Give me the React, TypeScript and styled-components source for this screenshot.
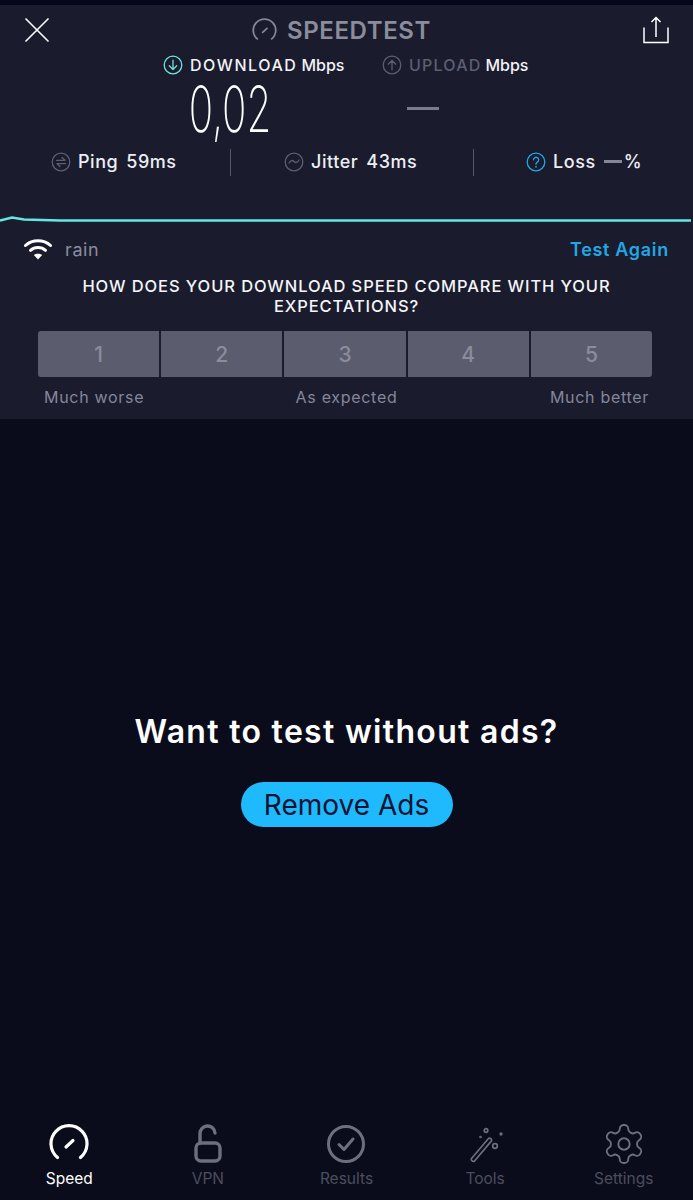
import { ReactNode } from "react";
import styled, { createGlobalStyle } from "styled-components";

const GlobalStyle = createGlobalStyle`
  html, body {
    margin: 0;
    padding: 0;
    background: #0a0c1b;
    font-family: "Inter", "Liberation Sans", sans-serif;
  }
  * {
    box-sizing: border-box;
  }
`;

const Screen = styled.div`
  width: 693px;
  height: 1200px;
  display: flex;
  flex-direction: column;
  background: #0a0c1b;
  overflow: hidden;
`;

const StatusStrip = styled.div`
  height: 5px;
  background: #05061a;
`;

const ResultPanel = styled.section`
  height: 414px;
  background: #1a1c2e;
  display: flex;
  flex-direction: column;
`;

const Header = styled.header`
  height: 50px;
  padding: 0 24px;
  display: flex;
  align-items: center;
  justify-content: space-between;
`;

const Brand = styled.div`
  margin-right: 10px;
  display: flex;
  align-items: center;
  gap: 10px;
  color: #8b8c9c;
  font-size: 24px;
  font-weight: 600;
  letter-spacing: 0.6px;
`;

const Metrics = styled.div`
  display: grid;
  grid-template-columns: 346px 1fr;
`;

const MetricColumn = styled.div<{ $left: number }>`
  padding-left: ${(props) => props.$left}px;
`;

const MetricLabel = styled.div`
  height: 20px;
  display: flex;
  align-items: center;
  gap: 7px;
  font-size: 16px;
  font-weight: 500;
  color: #f2f3f7;
  white-space: nowrap;
`;

const MetricName = styled.span<{ $muted?: boolean }>`
  color: ${(props) => (props.$muted ? "#5d5f71" : "#f2f3f7")};
  letter-spacing: ${(props) => (props.$muted ? "1.2px" : "1.55px")};
  margin-right: -3px;
`;

const MetricValue = styled.div`
  width: 134px;
  height: 68px;
  text-align: center;
  font-size: 64px;
  line-height: 68px;
  font-weight: 200;
  color: #fff;
  transform: scaleX(0.63);
`;

const EmptyDash = styled.div`
  width: 32px;
  height: 3px;
  margin: 32px 0 33px 25px;
  background: #7a7b8b;
`;

const StatsRow = styled.div`
  height: 27px;
  margin-top: 6px;
  display: grid;
  grid-template-columns: 231px 243px 1fr;
  align-items: center;
`;

const StatCell = styled.div<{ $left: number; $divider?: boolean }>`
  height: 27px;
  padding: 0 0 2px ${(props) => props.$left}px;
  display: flex;
  align-items: center;
  gap: 7px;
  border-right: ${(props) => (props.$divider ? "1px solid #56586a" : "none")};
  font-size: 18px;
  font-weight: 500;
  letter-spacing: 0.55px;
  color: #eceef3;
  white-space: nowrap;
`;

const StatValue = styled.span`
  margin-left: 1px;
`;

const StatDash = styled.span`
  width: 18px;
  height: 3px;
  margin: 0 -5px 0 1px;
  background: #85869a;
`;

const Trace = styled.svg`
  display: block;
  margin-top: 37px;
  flex: none;
`;

const NetworkRow = styled.div`
  height: 30px;
  margin-top: 9px;
  padding: 0 24px 0 24px;
  display: flex;
  align-items: center;
`;

const NetworkName = styled.span`
  margin-left: 13px;
  flex: 1;
  font-size: 18px;
  letter-spacing: 0.6px;
  color: #8b8c9c;
`;

const TestAgain = styled.span`
  font-size: 18px;
  font-weight: 600;
  letter-spacing: 0.7px;
  color: #21a7e6;
`;

const Question = styled.h2`
  width: 580px;
  margin: 12px auto 0;
  font-size: 16.5px;
  line-height: 20px;
  font-weight: 500;
  letter-spacing: 0.9px;
  color: #f4f5f8;
  text-align: center;
`;

const Ratings = styled.div`
  margin: 15px 0 0 38px;
  width: 614px;
  display: grid;
  grid-template-columns: repeat(5, 1fr);
  gap: 2px;
`;

const RatingButton = styled.button<{ $edge?: "start" | "end" }>`
  height: 46px;
  padding: 0;
  border: 0;
  border-radius: ${(props) =>
    props.$edge === "start"
      ? "3px 0 0 3px"
      : props.$edge === "end"
        ? "0 3px 3px 0"
        : "0"};
  background: #5b5c6e;
  color: #8b8c9c;
  font-family: inherit;
  font-size: 21px;
  font-weight: 500;
`;

const RatingCaptions = styled.div`
  margin: 10px 0 0 44px;
  width: 605px;
  display: grid;
  grid-template-columns: 1fr 1fr 1fr;
  font-size: 16px;
  line-height: 20px;
  letter-spacing: 0.7px;
  color: #85869a;
`;

const Caption = styled.span<{ $align: "left" | "center" | "right" }>`
  text-align: ${(props) => props.$align};
  white-space: nowrap;
`;

const AdArea = styled.main`
  flex: 1;
  display: flex;
  flex-direction: column;
  align-items: center;
  padding-top: 292px;
`;

const AdTitle = styled.h1`
  margin: 0;
  font-size: 32px;
  line-height: 42px;
  font-weight: 600;
  color: #fff;
  letter-spacing: 1.3px;
  white-space: nowrap;
`;

const RemoveAds = styled.button`
  width: 212px;
  height: 45px;
  margin-top: 29px;
  border: 0;
  border-radius: 23px;
  background: #1fb9fd;
  color: #0c1230;
  font-family: inherit;
  font-size: 28px;
  font-weight: 400;
`;

const TabBar = styled.nav`
  height: 76px;
  display: grid;
  grid-template-columns: repeat(5, 1fr);
`;

const Tab = styled.div`
  display: flex;
  flex-direction: column;
  align-items: center;
  gap: 5px;
  font-size: 15.5px;
  line-height: 20px;
`;

const TabLabel = styled.span<{ $active?: boolean }>`
  color: ${(props) => (props.$active ? "#ffffff" : "#4c4e5e")};
`;

const Gauge = ({ size, width, color }: { size: number; width: number; color: string }) => (
  <svg width={size} height={size} viewBox="0 0 40 40" fill="none" stroke={color} strokeWidth={width} strokeLinecap="round">
    <path d="M8.500 33.500A18 18 0 1 1 31.500 33.500" />
    <path d="M17 23L24 16.500" />
  </svg>
);

const Ring = ({ color, children }: { color: string; children: ReactNode }) => (
  <svg width="20" height="20" viewBox="0 0 20 20" fill="none" stroke={color} strokeWidth="1.3" strokeLinecap="round" strokeLinejoin="round">
    <circle cx="10" cy="10" r="8.800" />
    {children}
  </svg>
);

const tabs = [
  {
    label: "Speed",
    active: true,
    icon: <Gauge size={40} width={3.2} color="#ffffff" />,
  },
  {
    label: "VPN",
    icon: (
      <svg width="40" height="40" viewBox="0 0 40 40" fill="none" stroke="#6d6e7e" strokeWidth="3.400" strokeLinecap="round">
        <rect x="8" y="19" width="24" height="18" rx="5" />
        <path d="M12 19V10a7.500 7.500 0 0 1 15-1" />
      </svg>
    ),
  },
  {
    label: "Results",
    icon: (
      <svg width="40" height="40" viewBox="0 0 40 40" fill="none" stroke="#6d6e7e" strokeWidth="3" strokeLinecap="round" strokeLinejoin="round">
        <circle cx="20" cy="20" r="17.500" />
        <path d="M13 20.500L18 25.500L27 15" />
      </svg>
    ),
  },
  {
    label: "Tools",
    icon: (
      <svg width="40" height="40" viewBox="0 0 40 40" fill="none" stroke="#6d6e7e" strokeWidth="1.700" strokeLinecap="round" strokeLinejoin="round">
        <path d="M6.500 34.500L23.500 14.500a2 2 0 0 1 3 2.400L9.500 37a2 2 0 0 1-3-2.500z" />
        <circle cx="21" cy="6.500" r="1.800" />
        <circle cx="30" cy="22" r="2.300" />
        <circle cx="36" cy="10" r="0.800" />
        <circle cx="15.500" cy="13" r="0.500" />
      </svg>
    ),
  },
  {
    label: "Settings",
    icon: (
      <svg width="40" height="40" viewBox="1.500 1.500 21 21" fill="none" stroke="#6d6e7e" strokeWidth="1" strokeLinecap="round" strokeLinejoin="round">
        <path d="M12.220 2h-.44a2 2 0 0 0-2 2v.18a2 2 0 0 1-1 1.730l-.43.25a2 2 0 0 1-2 0l-.15-.08a2 2 0 0 0-2.730.73l-.22.38a2 2 0 0 0 .73 2.730l.15.1a2 2 0 0 1 1 1.720v.51a2 2 0 0 1-1 1.740l-.15.09a2 2 0 0 0-.73 2.730l.22.38a2 2 0 0 0 2.730.73l.15-.08a2 2 0 0 1 2 0l.43.25a2 2 0 0 1 1 1.730V20a2 2 0 0 0 2 2h.44a2 2 0 0 0 2-2v-.18a2 2 0 0 1 1-1.730l.43-.25a2 2 0 0 1 2 0l.15.08a2 2 0 0 0 2.730-.73l.22-.39a2 2 0 0 0-.73-2.730l-.15-.08a2 2 0 0 1-1-1.740v-.5a2 2 0 0 1 1-1.740l.15-.09a2 2 0 0 0 .73-2.730l-.22-.38a2 2 0 0 0-2.730-.73l-.15.08a2 2 0 0 1-2 0l-.43-.25a2 2 0 0 1-1-1.730V4a2 2 0 0 0-2-2z" />
        <circle cx="12" cy="12" r="3" />
      </svg>
    ),
  },
];

const App = () => {
  return (
    <Screen>
      <GlobalStyle />
      <StatusStrip />
      <ResultPanel>
        <Header>
          <svg width="26" height="26" viewBox="0 0 26 26" stroke="#ffffff" strokeWidth="1.600" fill="none">
            <path d="M1.500 1.500L24.500 24.500M24.500 1.500L1.500 24.500" />
          </svg>
          <Brand>
            <Gauge size={25} width={2.8} color="#85869a" />
            SPEEDTEST
          </Brand>
          <svg width="26" height="28" viewBox="0 0 26 28" stroke="#ffffff" strokeWidth="1.500" fill="none">
            <path d="M1 11.500V26.500H25V11.500" />
            <path d="M13 21V1.500M8.500 6L13 1.500L17.500 6" />
          </svg>
        </Header>
        <Metrics>
          <MetricColumn $left={163}>
            <MetricLabel>
              <Ring color="#6fe3dc">
                <path d="M10 5.200V14.400M6.300 10.800L10 14.500L13.700 10.800" />
              </Ring>
              <MetricName>DOWNLOAD</MetricName> Mbps
            </MetricLabel>
            <MetricValue>0,02</MetricValue>
          </MetricColumn>
          <MetricColumn $left={36}>
            <MetricLabel>
              <Ring color="#5d5f71">
                <path d="M10 14.800V5.600M6.300 9.200L10 5.500L13.700 9.200" />
              </Ring>
              <MetricName $muted>UPLOAD</MetricName> Mbps
            </MetricLabel>
            <EmptyDash />
          </MetricColumn>
        </Metrics>
        <StatsRow>
          <StatCell $left={51} $divider>
            <Ring color="#5d5f71">
              <path d="M5.500 8.300H14L11 5.500M14.500 11.700H6L9 14.500" />
            </Ring>
            Ping <StatValue>59ms</StatValue>
          </StatCell>
          <StatCell $left={53} $divider>
            <Ring color="#5d5f71">
              <path d="M5 11c1.500-3 3.500-3 5-1.500s3.500 1.500 5-1.500" />
            </Ring>
            Jitter <StatValue>43ms</StatValue>
          </StatCell>
          <StatCell $left={52}>
            <Ring color="#21a7e6">
              <path d="M7.500 7.800a2.600 2.600 0 1 1 3.900 2.300c-1 .6-1.400 1.100-1.400 2.200" />
              <circle cx="10" cy="14.700" r="0.300" />
            </Ring>
            Loss <StatDash /> %
          </StatCell>
        </StatsRow>
        <Trace width="693" height="12" viewBox="0 0 693 12" fill="none">
          <path d="M0 7.500L12 4.500L24 6.500L60 7.500H691" stroke="#66e6e0" strokeWidth="2.600" />
        </Trace>
        <NetworkRow>
          <svg width="28" height="22" viewBox="0 0 28 22" fill="none" stroke="#ffffff" strokeWidth="3" strokeLinecap="round">
            <path d="M1.500 7.500C8.500 1.200 19.500 1.200 26.500 7.500" />
            <path d="M6.500 12.300C10.800 8.500 17.200 8.500 21.500 12.300" />
            <path d="M14 21.500L9.800 17C12.200 15.200 15.800 15.200 18.200 17Z" fill="#ffffff" stroke="none" />
          </svg>
          <NetworkName>rain</NetworkName>
          <TestAgain>Test Again</TestAgain>
        </NetworkRow>
        <Question>HOW DOES YOUR DOWNLOAD SPEED COMPARE WITH YOUR EXPECTATIONS?</Question>
        <Ratings>
          {[1, 2, 3, 4, 5].map((n) => (
            <RatingButton key={n} $edge={n === 1 ? "start" : n === 5 ? "end" : undefined}>
              {n}
            </RatingButton>
          ))}
        </Ratings>
        <RatingCaptions>
          <Caption $align="left">Much worse</Caption>
          <Caption $align="center">As expected</Caption>
          <Caption $align="right">Much better</Caption>
        </RatingCaptions>
      </ResultPanel>
      <AdArea>
        <AdTitle>Want to test without ads?</AdTitle>
        <RemoveAds>Remove Ads</RemoveAds>
      </AdArea>
      <TabBar>
        {tabs.map((tab) => (
          <Tab key={tab.label}>
            {tab.icon}
            <TabLabel $active={tab.active}>{tab.label}</TabLabel>
          </Tab>
        ))}
      </TabBar>
    </Screen>
  );
};

export default App;
